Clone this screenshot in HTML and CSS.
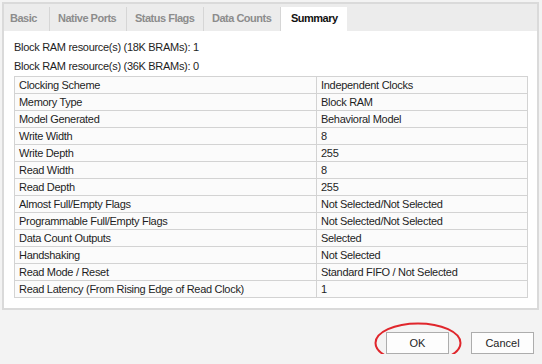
FILE: index.html
```html
<!DOCTYPE html>
<html lang="en">
<head>
    <meta charset="UTF-8">
    <title>FIFO Generator - Summary</title>
    <link rel="stylesheet" href="styles.css">
</head>
<body>
    <div class="dialog-panel">
        <div class="tab-bar">
            <div class="tab tab-basic">Basic</div>
            <div class="tab">Native Ports</div>
            <div class="tab">Status Flags</div>
            <div class="tab">Data Counts</div>
            <div class="tab active">Summary</div>
        </div>

        <div class="tab-content">
            <p class="info-line">Block RAM resource(s) (18K BRAMs): 1</p>
            <p class="info-line">Block RAM resource(s) (36K BRAMs): 0</p>

            <table class="summary-table">
                <tr><td class="col-name">Clocking Scheme</td><td>Independent Clocks</td></tr>
                <tr><td class="col-name">Memory Type</td><td>Block RAM</td></tr>
                <tr><td class="col-name">Model Generated</td><td>Behavioral Model</td></tr>
                <tr><td class="col-name">Write Width</td><td>8</td></tr>
                <tr><td class="col-name">Write Depth</td><td>255</td></tr>
                <tr><td class="col-name">Read Width</td><td>8</td></tr>
                <tr><td class="col-name">Read Depth</td><td>255</td></tr>
                <tr><td class="col-name">Almost Full/Empty Flags</td><td>Not Selected/Not Selected</td></tr>
                <tr><td class="col-name">Programmable Full/Empty Flags</td><td>Not Selected/Not Selected</td></tr>
                <tr><td class="col-name">Data Count Outputs</td><td>Selected</td></tr>
                <tr><td class="col-name">Handshaking</td><td>Not Selected</td></tr>
                <tr><td class="col-name">Read Mode / Reset</td><td>Standard FIFO / Not Selected</td></tr>
                <tr><td class="col-name">Read Latency (From Rising Edge of Read Clock)</td><td>1</td></tr>
            </table>
        </div>
    </div>

    <div class="dialog-buttons">
        <div class="ok-wrap">
            <button class="dialog-btn">OK</button>
            <!-- red annotation circle -->
            <svg class="ok-circle" width="90" height="44" viewBox="0 0 90 44">
                <ellipse cx="45" cy="22" rx="42.5" ry="19.5" fill="none" stroke="#e0262c" stroke-width="2"/>
            </svg>
        </div>
        <button class="dialog-btn">Cancel</button>
    </div>
</body>
</html>
```

FILE: styles.css
```css
body {
    margin: 0;
    background-color: #f3f3f3;
    font-family: "Liberation Sans", Arial, sans-serif;
    font-size: 11px;
    letter-spacing: -0.3px;
    color: #1e1e1e;
}

.dialog-panel {
    margin: 2px 3px 0 2px;
    height: 304px;
    border: 2px solid #dadada;
    background-color: #ffffff;
    display: flex;
    flex-direction: column;
}

/* Tabs */
.tab-bar {
    display: flex;
    height: 27px;
    background-color: #ececec;
}

.tab {
    width: 77px;
    padding-left: 8px;
    box-sizing: border-box;
    font-weight: bold;
    letter-spacing: -0.5px;
    color: #8c8c8c;
    border-right: 1px solid #d6d6d6;
    margin-top: 3px;
    line-height: 23px;
}

.tab-basic {
    width: 46px;
    padding-left: 6px;
}

.tab.active {
    width: 66px;
    color: #111111;
    background-color: #ffffff;
    border-right: none;
    padding-left: 10px;
}

/* Content */
.tab-content {
    padding: 7px 10px 0 10px;
}

.info-line {
    margin: 0;
    line-height: 19px;
}

.summary-table {
    border-collapse: collapse;
    width: 514px;
}

.summary-table td {
    border: 1px solid #d3d3d3;
    background-color: #fbfbfb;
    height: 16px;
    padding: 0 0 0 4px;
    line-height: 16px;
    white-space: nowrap;
}

.summary-table .col-name {
    width: 297px;
}

/* Buttons */
.dialog-buttons {
    display: flex;
    justify-content: flex-end;
    gap: 22px;
    margin-top: 22px;
    padding-right: 8px;
}

.ok-wrap {
    position: relative;
}

.dialog-btn {
    width: 63px;
    height: 22px;
    background-color: #fdfdfd;
    border: 1px solid #adadad;
    border-radius: 0;
    font-family: "Liberation Sans", Arial, sans-serif;
    font-size: 11px;
    color: #1e1e1e;
    padding: 0;
}

.ok-circle {
    position: absolute;
    left: -13px;
    top: -11px;
    pointer-events: none;
}
```
